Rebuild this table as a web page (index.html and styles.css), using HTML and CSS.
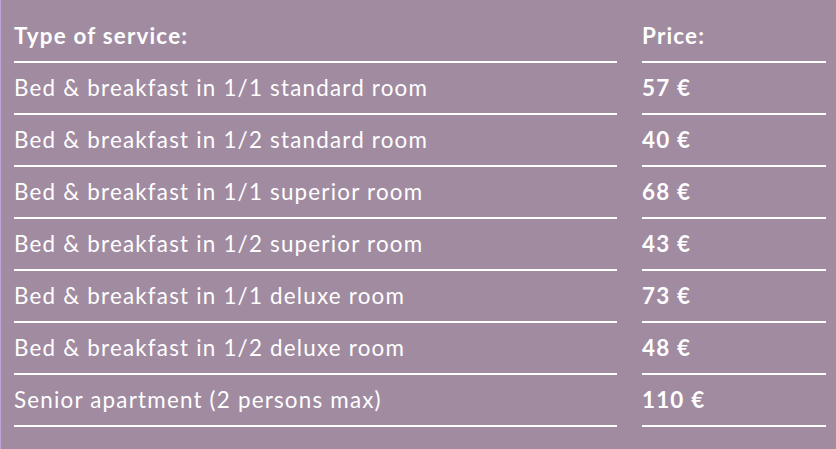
FILE: index.html
```html
<!DOCTYPE html>
<html>
<head>
<meta charset="utf-8">
<link rel="stylesheet" href="styles.css">
</head>
<body>
<div class="price-table">
  <div class="row head"><div class="cell">Type of service:</div><div class="cell">Price:</div></div>
  <div class="row"><div class="cell">Bed &amp; breakfast in 1/1 standard room</div><div class="cell price">57 €</div></div>
  <div class="row"><div class="cell">Bed &amp; breakfast in 1/2 standard room</div><div class="cell price">40 €</div></div>
  <div class="row"><div class="cell">Bed &amp; breakfast in 1/1 superior room</div><div class="cell price">68 €</div></div>
  <div class="row"><div class="cell">Bed &amp; breakfast in 1/2 superior room</div><div class="cell price">43 €</div></div>
  <div class="row"><div class="cell">Bed &amp; breakfast in 1/1 deluxe room</div><div class="cell price">73 €</div></div>
  <div class="row"><div class="cell">Bed &amp; breakfast in 1/2 deluxe room</div><div class="cell price">48 €</div></div>
  <div class="row"><div class="cell">Senior apartment (2 persons max)</div><div class="cell price">110 €</div></div>
</div>
</body>
</html>
```
FILE: styles.css
```css
html, body {
  margin: 0;
  padding: 0;
}
body {
  width: 836px;
  height: 449px;
  background: #a18ba1;
  border-left: 1px solid #bba5d6;
  box-sizing: border-box;
  font-family: Lato, "Noto Sans", sans-serif;
  color: #ffffff;
  overflow: hidden;
}
.price-table {
  padding: 11px 10px 0 13px;
  display: flex;
  flex-direction: column;
}
.row {
  display: grid;
  grid-template-columns: 603px 184px;
  column-gap: 25px;
}
.cell {
  height: 50px;
  line-height: 50px;
  font-size: 22.4px;
  letter-spacing: 1.2px;
  border-bottom: 2px solid #ffffff;
  white-space: nowrap;
}
.head .cell, .price {
  font-weight: bold;
}
```
